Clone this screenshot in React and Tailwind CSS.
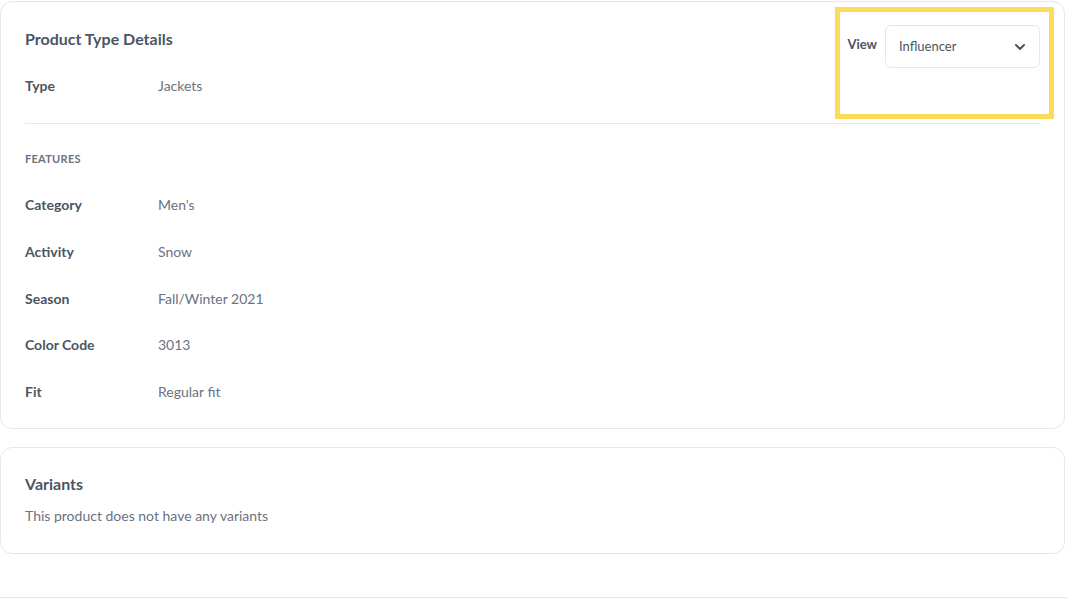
import { ChevronDown } from 'lucide-react'

const FEATURES = [
  { label: 'Category', value: "Men's" },
  { label: 'Activity', value: 'Snow' },
  { label: 'Season', value: 'Fall/Winter 2021' },
  { label: 'Color Code', value: '3013' },
  { label: 'Fit', value: 'Regular fit' },
]

function Row({ label, value }) {
  return (
    <div className="flex items-center leading-5 text-[14px]">
      <span className="w-[133px] font-bold text-[#4b5563]">{label}</span>
      <span className="text-[#6b7280]">{value}</span>
    </div>
  )
}

export default function App() {
  return (
    <div className="min-h-[599px] bg-white font-['Lato',sans-serif] pt-px">
      <div className="relative mr-[2px] rounded-xl border border-[#e5e7eb] bg-white px-6 pt-[23px] pb-[26px]">
        <div className="flex items-start justify-between">
          <div>
            <h2 className="text-[16px] leading-7 font-bold text-[#4b5563]">Product Type Details</h2>
            <div className="mt-[23px]">
              <Row label="Type" value="Jackets" />
            </div>
          </div>
          <div className="flex items-start gap-2">
            <span className="mt-[9px] text-[13px] leading-5 font-bold text-[#4b5563]">View</span>
            <button
              type="button"
              className="flex h-[43px] w-[155px] items-center justify-between rounded-md border border-[#e5e7eb] bg-white pl-[13px] pr-[11px] text-[13px] text-[#4b5563]"
            >
              Influencer
              <ChevronDown className="h-4 w-4 text-[#4b5563]" strokeWidth={3} />
            </button>
          </div>
        </div>

        <div className="mt-[27px] h-px bg-[#e5e7eb]" />

        <p className="mt-[27px] text-[11px] leading-4 font-bold uppercase tracking-wide text-[#6b7280]">Features</p>
        <div className="mt-[28px] flex flex-col gap-[26.75px]">
          {FEATURES.map((f) => (
            <Row key={f.label} {...f} />
          ))}
        </div>

        {/* highlight annotation */}
        <div className="pointer-events-none absolute left-[834px] top-[5px] h-[112px] w-[219px] border-[5px] border-[#fddc5c]" />
      </div>

      <div className="mt-[18px] mr-[2px] rounded-xl border border-[#e5e7eb] bg-white px-6 pt-[24px] pb-[27px]">
        <h2 className="text-[16px] leading-6 font-bold text-[#4b5563]">Variants</h2>
        <p className="mt-[10px] text-[14px] leading-5 text-[#6b7280]">This product does not have any variants</p>
      </div>

      <div className="mt-[43px] h-px bg-[#e5e7eb]" />
    </div>
  )
}
